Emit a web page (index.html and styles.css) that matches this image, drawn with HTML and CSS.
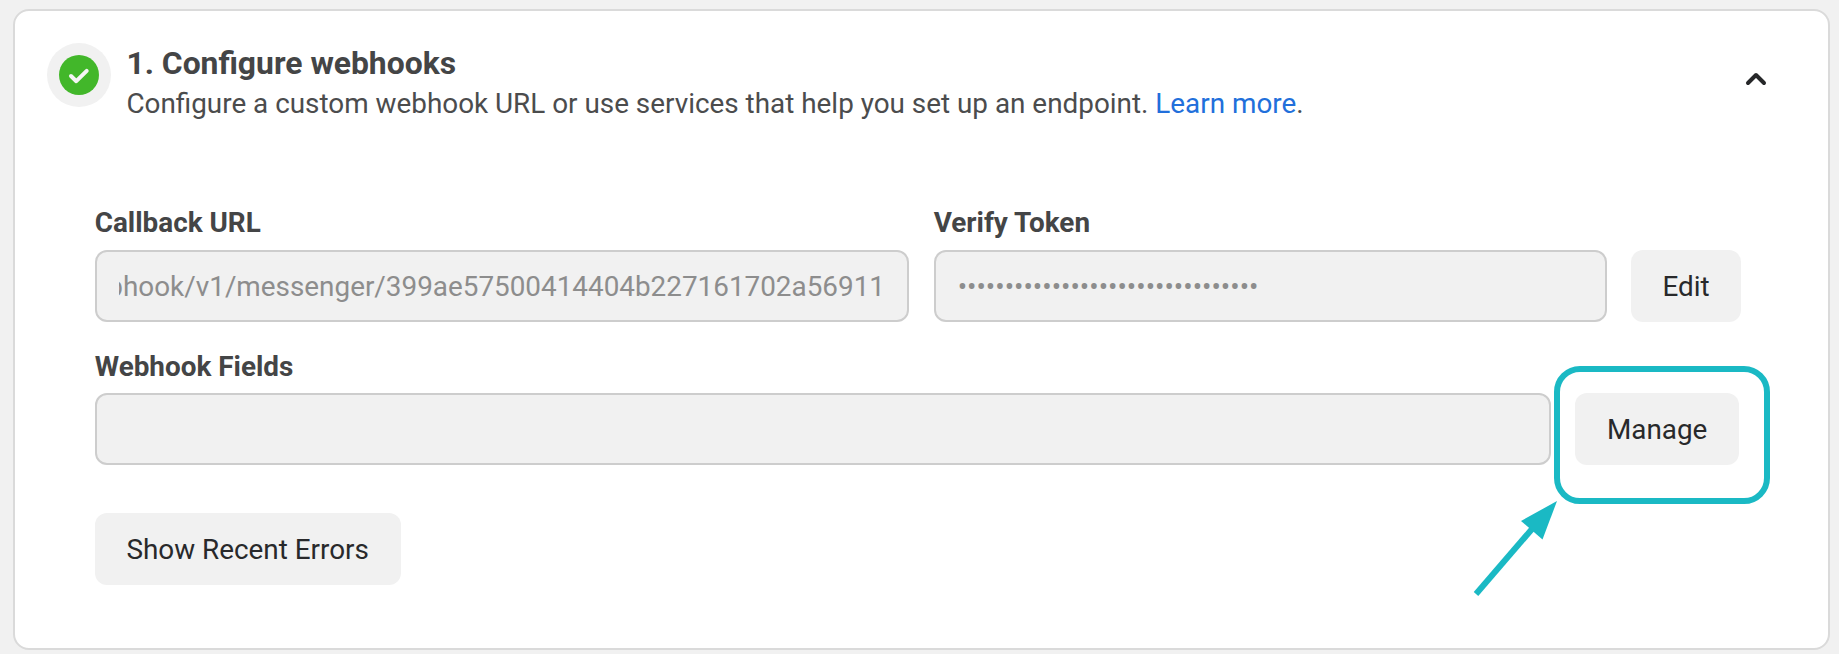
FILE: index.html
```
<!DOCTYPE html>
<html lang="en">
<head>
<meta charset="utf-8">
<title>Configure webhooks</title>
<link rel="stylesheet" href="styles.css">
</head>
<body>
<main class="card">
  <header class="card-header">
    <span class="status">
      <svg width="64" height="64" viewBox="0 0 64 64"><circle cx="32" cy="32" r="20" fill="#42b72a"/><path d="M24 33 L29.3 38.2 L39.7 27.8" fill="none" stroke="#f5f5f5" stroke-width="4" stroke-linecap="round" stroke-linejoin="round"/></svg>
    </span>
    <div class="heading">
      <h1 class="title">1. Configure webhooks</h1>
      <p class="subtitle">Configure a custom webhook URL or use services that help you set up an endpoint. <a class="link">Learn more</a>.</p>
    </div>
    <svg class="chevron" width="22" height="14" viewBox="0 0 22 14"><path d="M3 11 L11 3 L19 11" fill="none" stroke="#262729" stroke-width="4" stroke-linecap="round" stroke-linejoin="round"/></svg>
  </header>
  <section class="row">
    <div class="field field-callback">
      <span class="label">Callback URL</span>
      <div class="input"><div class="value value-end"><span>bhook/v1/messenger/399ae57500414404b227161702a56911</span></div></div>
    </div>
    <div class="field field-token">
      <span class="label">Verify Token</span>
      <div class="input"><div class="value">••••••••••••••••••••••••••••••••</div></div>
    </div>
    <button class="button button-edit">Edit</button>
  </section>
  <section class="row row-fields">
    <div class="field field-webhook">
      <span class="label">Webhook Fields</span>
      <div class="input"></div>
    </div>
    <div class="manage">
      <button class="button button-manage">Manage</button>
      <span class="highlight"></span>
      <svg class="arrow" width="90" height="100" viewBox="0 0 90 100"><path d="M6 94 L62 29" stroke="#1ab9c4" stroke-width="6"/><path d="M87 1 L51 21 L72.5 39.5 Z" fill="#1ab9c4"/></svg>
    </div>
  </section>
  <button class="button button-errors">Show Recent Errors</button>
</main>
</body>
</html>
```
FILE: styles.css
```
* { box-sizing: border-box; }
body {
  margin: 0;
  height: 654px;
  padding: 9px 9px 4px 13px;
  overflow: hidden;
  background: #f1f1f1;
  color: #444546;
  font: 27.86px/36px Roboto, sans-serif;
}
.card {
  height: 641px;
  padding: 32px 58px 0 79.7px;
  border: 2px solid #dadada;
  border-radius: 16px;
  background: #fff;
}
.card-header {
  display: flex;
  align-items: flex-start;
  height: 161px;
  margin-left: -48px;
}
.status {
  flex: none;
  width: 64px;
  height: 64px;
  border-radius: 50%;
  background: #f1f1f1;
}
.status svg { display: block; }
.heading { flex: 1; margin-left: 15.7px; }
.title { margin: 0; font-size: 31.85px; line-height: 40px; font-weight: 700; }
.subtitle { margin: 2px 0 0; color: #4b4c4d; line-height: 37px; white-space: nowrap; }
.link { color: #216fdb; }
.chevron { flex: none; margin: 29px 3px 0 0; }
.row { display: flex; align-items: flex-end; }
.field { flex: none; display: flex; flex-direction: column; gap: 9px; }
.label { font-weight: 700; padding-top: 1px; }
.field-callback { width: 814.3px; }
.field-token { width: 673px; margin-left: 24.7px; }
.field-webhook { width: 1456.3px; gap: 8px; }
.field-webhook .label { padding-top: 2px; }
.input {
  height: 72px;
  padding: 16px 22px;
  border: 2px solid #cdcdcd;
  border-radius: 12px;
  background: #f1f1f1;
  color: #8d8d8d;
}
.value { display: flex; overflow: hidden; line-height: 37px; white-space: nowrap; }
.value-end { justify-content: flex-end; }
.button {
  display: block;
  flex: none;
  height: 72px;
  padding: 1px 0 0;
  border: 0;
  border-radius: 12px;
  background: #f1f1f1;
  color: #28292b;
  font: 27.86px/36px Roboto, sans-serif;
}
.button-edit { width: 110.3px; margin-left: 24.3px; }
.button-manage { width: 164.3px; }
.button-errors { width: 306px; margin-top: 47.6px; padding-top: 2px; }
.row-fields { margin-top: 25.4px; }
.manage { position: relative; margin-left: 24px; }
.highlight {
  position: absolute;
  left: -21px;
  top: -27.4px;
  width: 216px;
  height: 138px;
  border: 6px solid #1ab9c4;
  border-radius: 26px;
}
.arrow { position: absolute; left: -105px; top: 106.6px; }
```
